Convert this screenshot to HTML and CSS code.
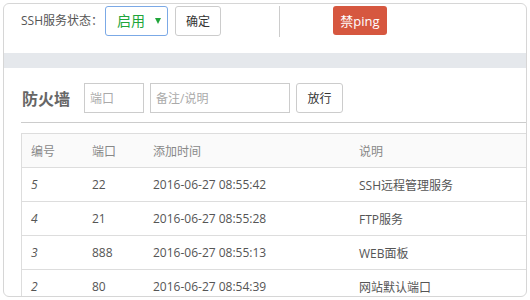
FILE: index.html
```html
<!DOCTYPE html>
<html lang="zh-CN">
<head>
  <meta charset="UTF-8">
  <title>安全</title>
  <link rel="stylesheet" href="styles.css">
</head>
<body>
  <div class="frame">
    <div class="topbar">
      <span class="label">SSH服务状态：</span>
      <div class="select">启用<span class="caret"></span></div>
      <button class="btn btn-ok">确定</button>
      <span class="divider"></span>
      <button class="btn btn-red">禁ping</button>
    </div>
    <div class="band"></div>
    <div class="firewall">
      <div class="form-row">
        <span class="title">防火墙</span>
        <input class="inp inp-port" type="text" placeholder="端口">
        <input class="inp inp-note" type="text" placeholder="备注/说明">
        <button class="btn btn-pass">放行</button>
      </div>
      <div class="line"></div>
      <table class="list">
        <tr class="head">
          <td class="c1">编号</td>
          <td class="c2">端口</td>
          <td class="c3">添加时间</td>
          <td>说明</td>
        </tr>
        <tr>
          <td class="num">5</td>
          <td>22</td>
          <td>2016-06-27 08:55:42</td>
          <td>SSH远程管理服务</td>
        </tr>
        <tr>
          <td class="num">4</td>
          <td>21</td>
          <td>2016-06-27 08:55:28</td>
          <td>FTP服务</td>
        </tr>
        <tr>
          <td class="num">3</td>
          <td>888</td>
          <td>2016-06-27 08:55:13</td>
          <td>WEB面板</td>
        </tr>
        <tr>
          <td class="num">2</td>
          <td>80</td>
          <td>2016-06-27 08:54:39</td>
          <td>网站默认端口</td>
        </tr>
      </table>
    </div>
  </div>
</body>
</html>
```

FILE: styles.css
```css
body {
  margin: 3px;
  background: #fff;
  font-family: "Open Sans", "Noto Sans CJK SC", sans-serif;
  color: #555;
}
.frame {
  width: 524px;
  height: 294px;
  box-sizing: border-box;
  border: 1px solid #d6d6d6;
  border-radius: 6px;
  overflow: hidden;
}
.topbar {
  height: 49px;
  box-sizing: border-box;
  padding: 2px 0 0 17px;
  display: flex;
  align-items: flex-start;
}
.label {
  width: 84px;
  height: 30px;
  line-height: 30px;
  font-size: 12px;
  color: #555;
}
.select {
  width: 63px;
  height: 30px;
  box-sizing: border-box;
  border: 1px solid #7ba9e6;
  border-radius: 3px;
  padding-left: 11px;
  line-height: 28px;
  font-size: 14px;
  color: #20a53a;
  position: relative;
}
.caret {
  position: absolute;
  right: 6px;
  top: 11px;
  border-left: 3px solid transparent;
  border-right: 3px solid transparent;
  border-top: 6px solid #20a53a;
}
.btn {
  height: 30px;
  box-sizing: border-box;
  border: 1px solid #ccc;
  border-radius: 3px;
  background: #fff;
  font-family: inherit;
  font-size: 12px;
  color: #333;
  padding: 0;
}
.btn-ok {
  width: 46px;
  margin-left: 7px;
}
.divider {
  width: 1px;
  height: 31px;
  margin-left: 58px;
  background: #ccc;
}
.btn-red {
  width: 54px;
  height: 29px;
  margin-left: 53px;
  border: none;
  background: #d6573f;
  color: #fff;
  font-size: 13px;
}
.band {
  height: 15px;
  background: #e5e8ec;
}
.firewall {
  padding: 15px 0 0 17px;
}
.form-row {
  display: flex;
  align-items: center;
}
.title {
  width: 63px;
  font-size: 16px;
  font-weight: bold;
  color: #666;
  padding-left: 1px;
  box-sizing: border-box;
}
.inp {
  height: 30px;
  box-sizing: border-box;
  border: 1px solid #ccc;
  padding: 0 5px;
  font-family: inherit;
  font-size: 12px;
  outline: none;
}
.inp::placeholder {
  color: #aaa;
}
.inp-port {
  width: 60px;
}
.inp-note {
  width: 140px;
  margin-left: 6px;
}
.btn-pass {
  width: 47px;
  margin-left: 6px;
}
.line {
  height: 1px;
  background: #ccc;
  margin-top: 9px;
}
.list {
  margin-top: 10px;
  width: 100%;
  border-collapse: collapse;
  font-size: 12px;
}
.list td {
  height: 33px;
  padding: 0 0 0 9px;
  border-top: 1px solid #ddd;
  border-left: 1px solid #ddd;
  color: #555;
}
.list td + td {
  border-left: none;
}
.list .head td {
  background: #fafafa;
  color: #888;
}
.c1, .c2 {
  width: 52px;
}
.c3 {
  width: 197px;
}
.num {
  font-style: italic;
}
```
